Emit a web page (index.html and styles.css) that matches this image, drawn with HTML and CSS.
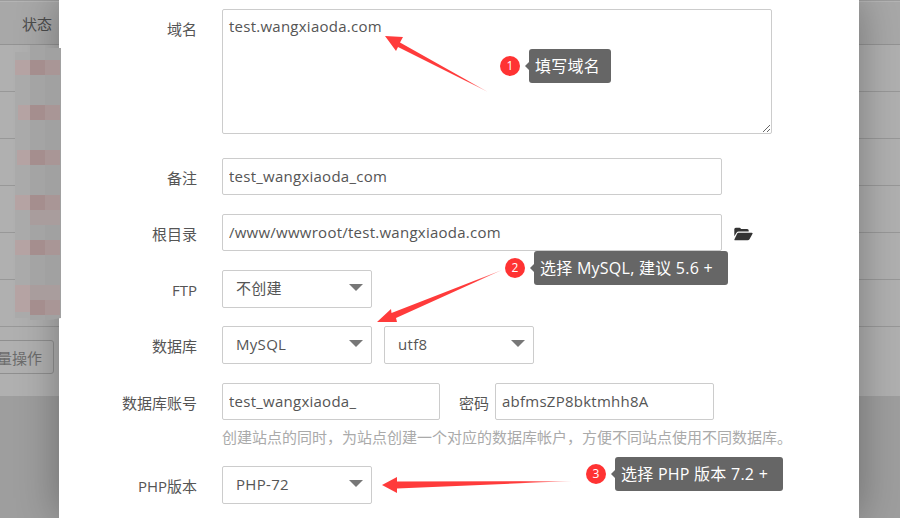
FILE: index.html
```html
<!DOCTYPE html>
<html lang="zh-CN">
<head>
<meta charset="utf-8">
<title>添加网站</title>
<link rel="stylesheet" href="styles.css">
</head>
<body>
<div class="screen">
  <div class="page">
    <div class="list">
      <div class="list-head"><span class="col-status">状态</span></div>
      <div class="list-row"></div>
      <div class="list-row"></div>
      <div class="list-row"></div>
      <div class="list-row"></div>
      <div class="list-row"></div>
      <div class="list-row"></div>
      <div class="list-foot"><button class="bulk" type="button">批量操作</button></div>
    </div>
  </div>

  <section class="modal">
    <form class="form">
      <div class="row row-domain">
        <label class="label">域名</label>
        <textarea class="field area" spellcheck="false">test.wangxiaoda.com</textarea>
      </div>
      <div class="row row-note">
        <label class="label">备注</label>
        <input class="field wide" value="test_wangxiaoda_com">
      </div>
      <div class="row row-root">
        <label class="label">根目录</label>
        <input class="field wide" value="/www/wwwroot/test.wangxiaoda.com">
        <svg class="folder" viewBox="0 0 19 14" width="19" height="14"><path d="M0.3 2.2 Q0.3 0.7 1.8 0.7 H5.5 Q6.6 0.7 6.9 2 H13.2 Q14.7 2 14.7 3.5 V4.6 H4.6 Q3.4 4.6 2.7 5.6 L0.3 9.2 Z M4.4 5.7 H17.6 Q19.2 5.7 18.4 7.1 L15.5 12.2 Q14.9 13.2 13.6 13.2 H1.3 Q-0.1 13.2 0.6 12 L3.2 6.6 Q3.6 5.7 4.4 5.7 Z"/></svg>
      </div>
      <div class="row row-ftp">
        <label class="label">FTP</label>
        <div class="picker"><select class="select"><option>不创建</option></select></div>
      </div>
      <div class="row row-db">
        <label class="label">数据库</label>
        <div class="picker"><select class="select"><option>MySQL</option></select></div>
        <div class="picker"><select class="select"><option>utf8</option></select></div>
      </div>
      <div class="row row-account">
        <label class="label">数据库账号</label>
        <input class="field account" value="test_wangxiaoda_">
        <label class="label-inline">密码</label>
        <input class="field password" value="abfmsZP8bktmhh8A">
      </div>
      <p class="help">创建站点的同时&#xFF0C;为站点创建一个对应的数据库帐户&#xFF0C;方便不同站点使用不同数据库。</p>
      <div class="row row-php">
        <label class="label">PHP版本</label>
        <div class="picker"><select class="select"><option>PHP-72</option></select></div>
      </div>
    </form>
  </section>

  <svg class="mosaic" viewBox="0 0 61 320" width="61" height="320">
    <path fill="#aaaaaa" d="M15 52H30V318H15Z"/>
    <path fill="#a4a4a4" d="M30 45H45V320H30Z"/>
    <path fill="#a1a1a1" d="M45 48H61V318L50 320H45Z"/>
    <path fill="#b5a3a3" d="M15 60H30V75H15ZM18 105H30V120H18ZM17 150H30V165H17ZM15 195H30V210H15ZM15 240H30V255H15ZM15 285H30V300H15ZM15 300H30V312H15Z"/>
    <path fill="#a58e8e" d="M30 60H45V75H30ZM30 105H45V120H30ZM30 150H45V165H30ZM30 195H45V210H30ZM30 240H45V255H30ZM30 300H45V315H30Z"/>
    <path fill="#a99696" d="M45 60H60V75H45ZM45 105H60V120H45ZM45 150H60V165H45ZM45 195H60V210H45ZM45 240H60V255H45ZM45 300H60V315H45Z"/>
    <path fill="#a99d9d" d="M30 210H60V225H30ZM30 285H60V300H30Z"/>
  </svg>

  <svg class="arrows" viewBox="0 0 900 518" width="900" height="518">
    <defs>
      <linearGradient id="fade1" gradientUnits="userSpaceOnUse" x1="400" y1="44" x2="488" y2="92"><stop offset="0.75" stop-color="#ff3b3b"/><stop offset="1" stop-color="#ff3b3b" stop-opacity="0.5"/></linearGradient>
      <linearGradient id="fade2" gradientUnits="userSpaceOnUse" x1="392" y1="314" x2="502" y2="270"><stop offset="0.75" stop-color="#ff3b3b"/><stop offset="1" stop-color="#ff3b3b" stop-opacity="0.5"/></linearGradient>
      <linearGradient id="fade3" gradientUnits="userSpaceOnUse" x1="397" y1="485" x2="572" y2="481"><stop offset="0.7" stop-color="#ff3b3b"/><stop offset="1" stop-color="#ff3b3b" stop-opacity="0.3"/></linearGradient>
    </defs>
    <polygon fill="url(#fade1)" points="385,36 403,37 400,42.5 488,92 398,47 396,51"/>
    <polygon fill="url(#fade2)" points="377,322 391,309 391.5,313 502,270 396,318 397,322"/>
    <polygon fill="url(#fade3)" points="382,485 397,477 397,481.5 572,481 397,488.5 397,493"/>
  </svg>

  <div class="note note-1"><span class="badge">1</span><span class="tip">填写域名</span></div>
  <div class="note note-2"><span class="badge">2</span><span class="tip">选择 MySQL, 建议 5.6 +</span></div>
  <div class="note note-3"><span class="badge">3</span><span class="tip">选择 PHP 版本 7.2 +</span></div>
</div>
</body>
</html>
```

FILE: styles.css
```css
* { box-sizing: border-box; }
html, body { margin: 0; padding: 0; }
body { font-family: "Open Sans", "Noto Sans CJK SC", sans-serif; }

.screen {
  position: relative;
  width: 900px;
  height: 518px;
  overflow: hidden;
  background: #9e9e9e;
}

/* dimmed page behind the dialog */
.list { background: #b0b0b0; height: 396px; }
.list-head {
  height: 45px;
  padding-left: 22px;
  border-top: 1px solid #9c9c9c;
  border-bottom: 1px solid #939393;
  background: #a8a8a8;
  box-shadow: inset 0 1px 0 #b4b4b4;
  line-height: 46px;
  font-size: 15px;
  color: #4c4c4c;
}
.list-row { height: 47px; border-bottom: 1px solid #989898; }
.list-foot { padding-top: 13px; }
.bulk {
  display: block;
  width: 84px;
  height: 34px;
  margin-left: -30px;
  padding: 0;
  border: 1px solid #8f8f8f;
  border-radius: 3px;
  background: transparent;
  font: 15px "Open Sans", "Noto Sans CJK SC", sans-serif;
  color: #6c6c6c;
}

/* dialog */
.modal {
  position: absolute;
  left: 59px;
  top: 0;
  width: 800px;
  height: 518px;
  background: #fff;
  box-shadow: 0 0 40px rgba(0, 0, 0, 0.32);
}
.form { padding-top: 9px; }
.row { display: flex; align-items: flex-start; }
.row-domain { height: 125px; margin-bottom: 24px; }
.row-note, .row-root { height: 37px; margin-bottom: 19px; }
.row-ftp { height: 38px; margin-bottom: 18px; }
.row-db { height: 38px; margin-bottom: 19px; }
.row-account { height: 37px; }
.row-php { height: 38px; }

.label {
  flex: none;
  width: 138px;
  margin-right: 25px;
  text-align: right;
  line-height: 40px;
  font-size: 15px;
  color: #555;
}
.label-inline {
  margin: 0 6px 0 19px;
  line-height: 40px;
  font-size: 15px;
  color: #555;
}
.field {
  display: block;
  height: 37px;
  padding: 0 6px 2px;
  border: 1px solid #ccc;
  border-radius: 2px;
  background: #fff;
  font: 15px "Open Sans", "Noto Sans CJK SC", sans-serif;
  letter-spacing: 0.25px;
  color: #555;
  outline: none;
}
.area { width: 550px; height: 125px; padding: 5px 6px; line-height: 22px; }
.wide { width: 500px; }
.account { width: 218px; }
.password { width: 219px; }

.folder { margin: 13px 0 0 12px; fill: #333; }

.picker { position: relative; width: 150px; height: 38px; }
.picker + .picker { margin-left: 12px; }
.picker::after {
  content: "";
  position: absolute;
  right: 9px;
  top: 14px;
  border-style: solid;
  border-width: 7px 7px 0;
  border-color: #777 transparent transparent;
}
.select {
  display: block;
  width: 100%;
  height: 100%;
  padding: 0 13px 2px;
  border: 1px solid #ccc;
  border-radius: 2px;
  background: #fff;
  appearance: none;
  font: 15px "Open Sans", "Noto Sans CJK SC", sans-serif;
  letter-spacing: 0.3px;
  color: #555;
  outline: none;
}

.help {
  height: 46px;
  margin: 0;
  padding-left: 163px;
  line-height: 34px;
  font-size: 15px;
  color: #aaa;
  white-space: nowrap;
}

/* annotations laid over the form */
.mosaic { position: absolute; left: 0; top: 0; }
.arrows { position: absolute; left: 0; top: 0; }
.note { position: absolute; display: flex; align-items: center; height: 34px; }
.note-1 { left: 500px; top: 49px; }
.note-2 { left: 505px; top: 251px; }
.note-3 { left: 586px; top: 457px; }
.badge {
  width: 20px;
  height: 20px;
  margin-right: 9px;
  border-radius: 50%;
  background: #ff3333;
  color: #fff;
  text-align: center;
  font-size: 12px;
  line-height: 20px;
}
.tip {
  position: relative;
  height: 34px;
  padding: 0 15px 0 6px;
  border-radius: 3px;
  background: #666;
  color: #fff;
  font-size: 16px;
  letter-spacing: 0.25px;
  line-height: 34px;
  white-space: nowrap;
}
.note-1 .tip { padding-right: 11px; }
.tip::before {
  content: "";
  position: absolute;
  left: -4px;
  top: 13px;
  border-style: solid;
  border-width: 4px 4px 4px 0;
  border-color: transparent #666 transparent transparent;
}
```
